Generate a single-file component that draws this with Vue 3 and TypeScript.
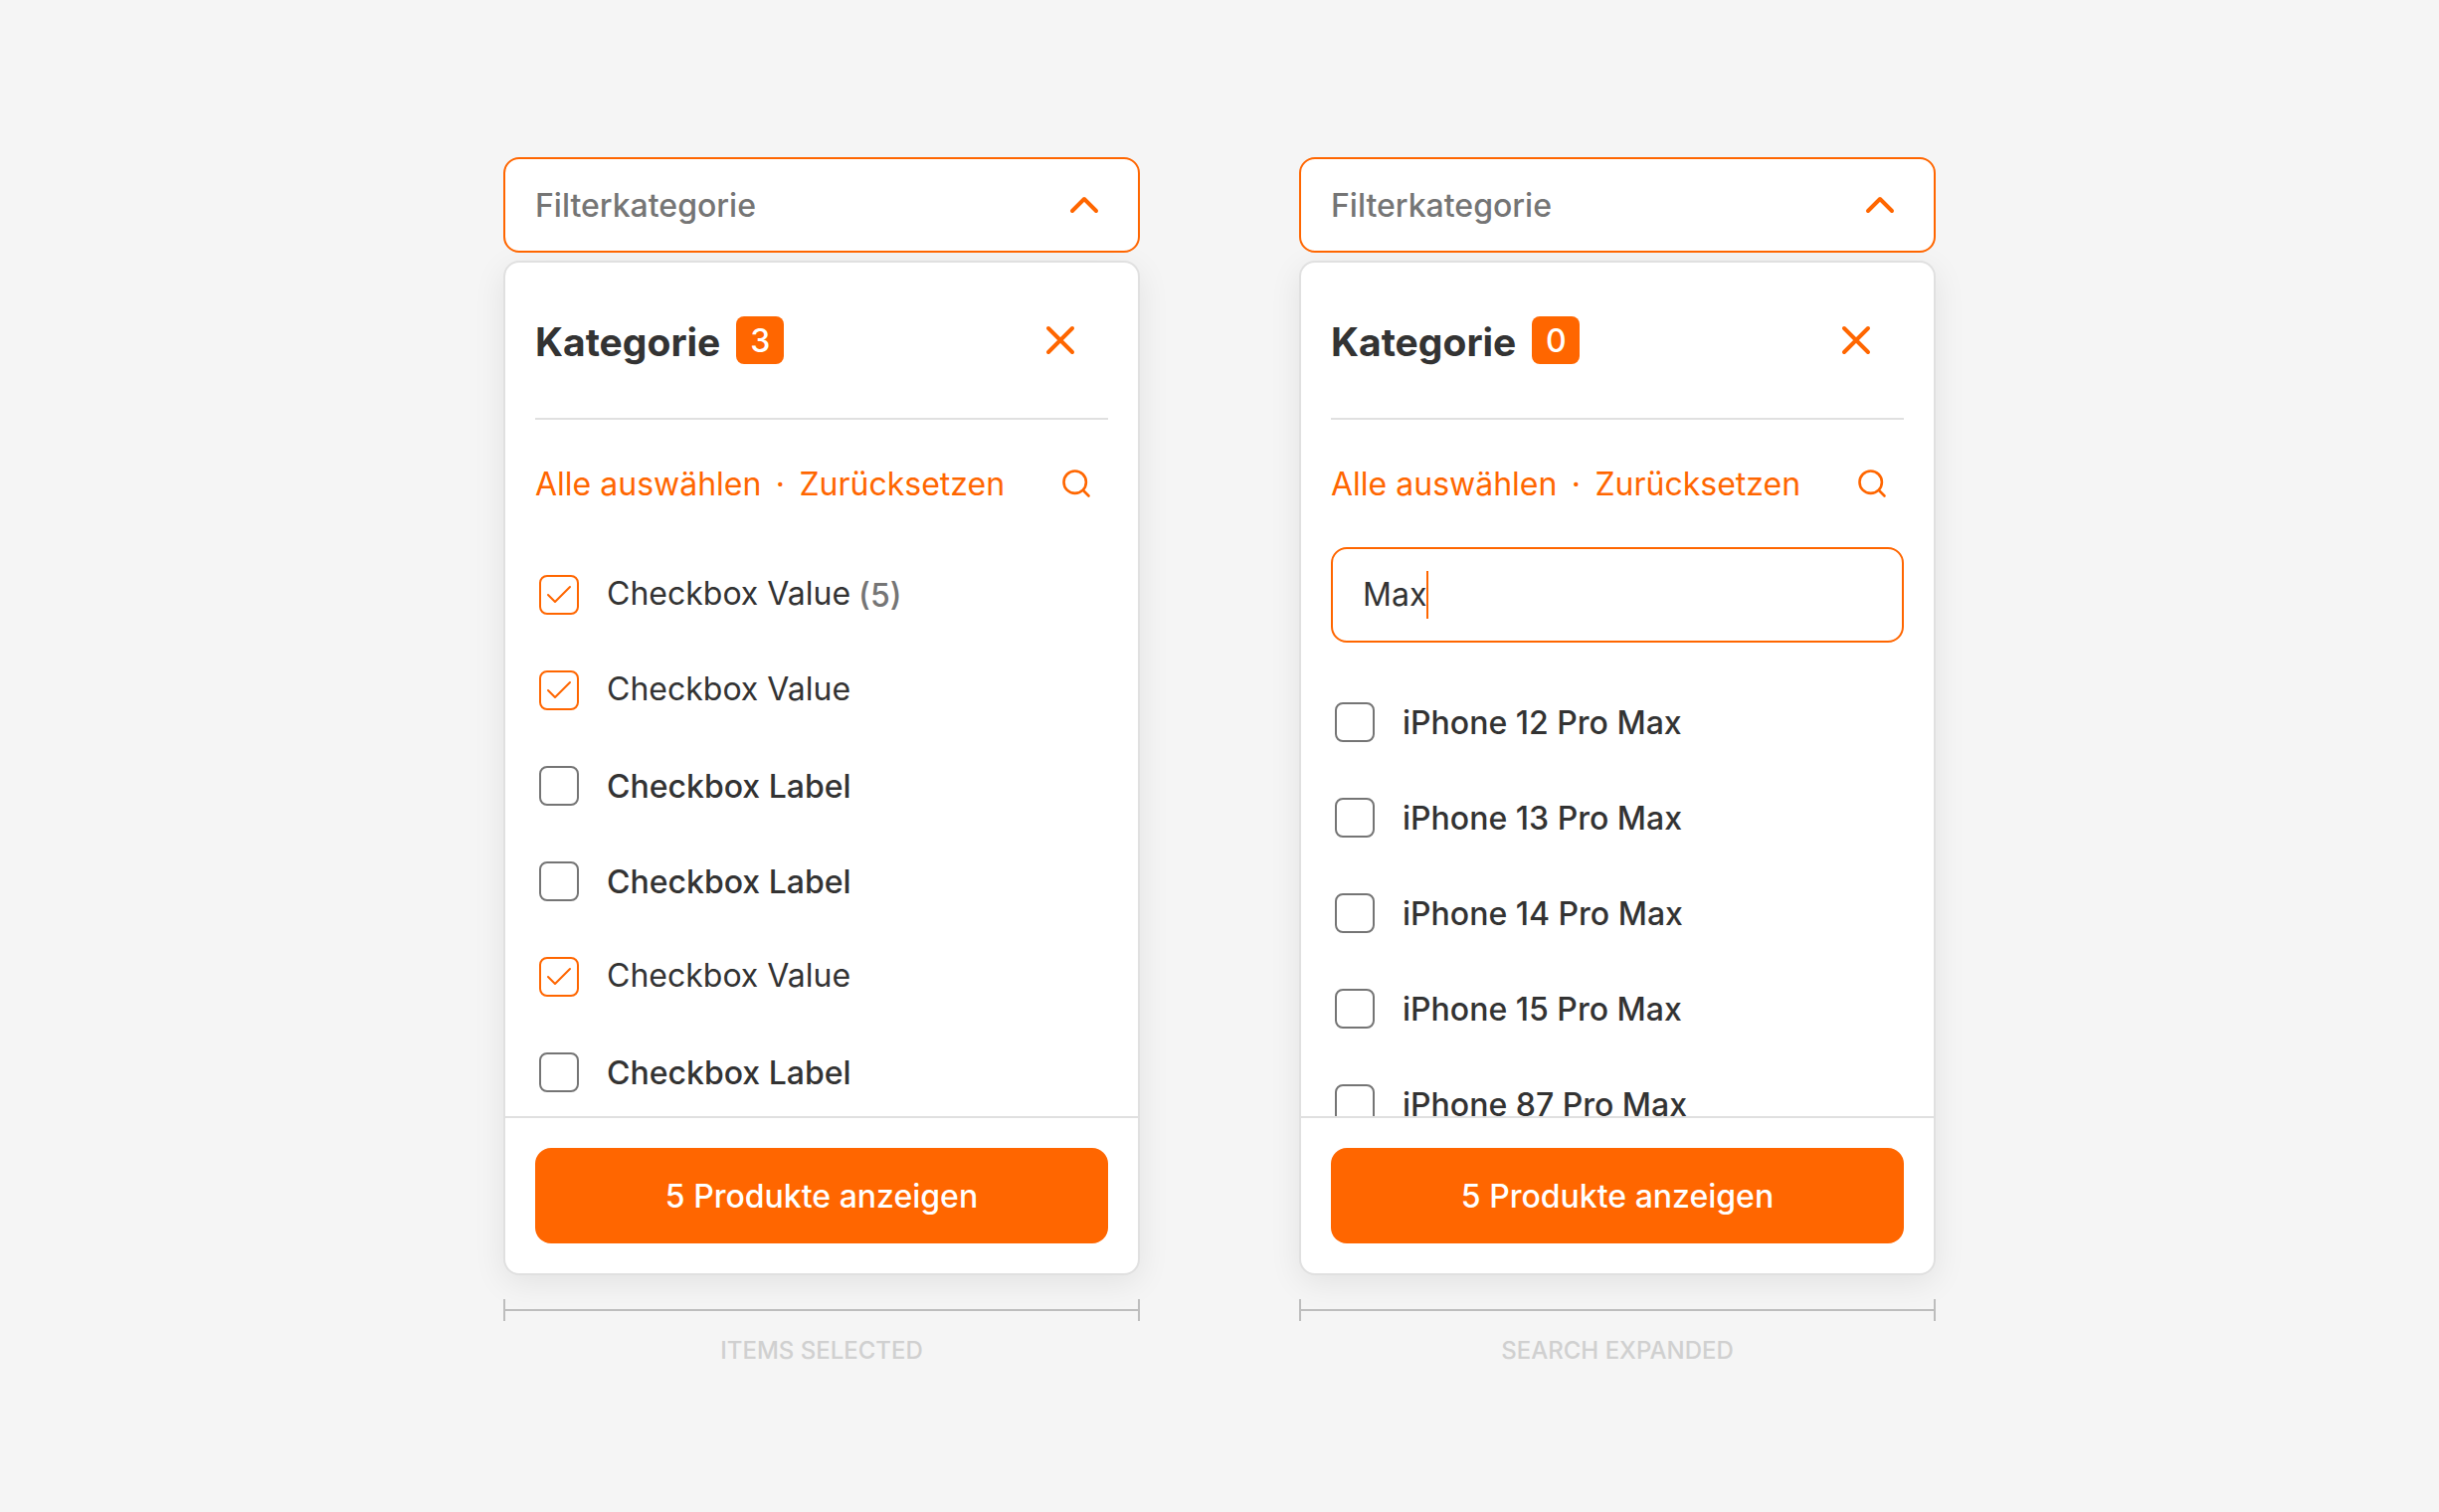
<script setup lang="ts">
import { reactive, computed } from 'vue'

interface Option {
  label: string
  checked: boolean
  count?: number
}

interface Filter {
  id: string
  caption: string
  searchOpen: boolean
  query: string
  options: Option[]
}

const filters = reactive<Filter[]>([
  {
    id: 'selected',
    caption: 'ITEMS SELECTED',
    searchOpen: false,
    query: '',
    options: [
      { label: 'Checkbox Value', checked: true, count: 5 },
      { label: 'Checkbox Value', checked: true },
      { label: 'Checkbox Label', checked: false },
      { label: 'Checkbox Label', checked: false },
      { label: 'Checkbox Value', checked: true },
      { label: 'Checkbox Label', checked: false },
    ],
  },
  {
    id: 'search',
    caption: 'SEARCH EXPANDED',
    searchOpen: true,
    query: 'Max',
    options: ['12', '13', '14', '15', '87'].map((n) => ({
      label: `iPhone ${n} Pro Max`,
      checked: false,
    })),
  },
])

const counts = computed(() =>
  filters.map((f) => f.options.filter((o) => o.checked).length),
)

function setAll(filter: Filter, value: boolean) {
  filter.options.forEach((o) => (o.checked = value))
}
</script>

<template>
  <main class="stage">
    <section v-for="(filter, i) in filters" :key="filter.id" class="column">
      <button class="trigger" type="button" aria-expanded="true">
        <span class="trigger-text">Filterkategorie</span>
        <svg class="icon" viewBox="0 0 48 48" aria-hidden="true">
          <path d="M12 30 24 18 36 30" stroke-width="4" />
        </svg>
      </button>

      <div class="panel">
        <header class="head">
          <h2 class="title">Kategorie</h2>
          <span class="badge">{{ counts[i] }}</span>
          <button class="icon-button close" type="button" aria-label="Schließen">
            <svg class="icon" viewBox="0 0 48 48" aria-hidden="true">
              <path d="M12 12 36 36M36 12 12 36" stroke-width="4" />
            </svg>
          </button>
        </header>

        <div class="tools">
          <button class="link" type="button" @click="setAll(filter, true)">Alle auswählen</button>
          <span class="dot">·</span>
          <button class="link" type="button" @click="setAll(filter, false)">Zurücksetzen</button>
          <button
            class="icon-button search"
            type="button"
            aria-label="Suchen"
            @click="filter.searchOpen = !filter.searchOpen"
          >
            <svg class="icon" viewBox="0 0 48 48" aria-hidden="true">
              <circle cx="22.7" cy="22.7" r="11.2" stroke-width="2.6" />
              <path d="M31 31 36.5 36.5" stroke-width="2.6" />
            </svg>
          </button>
        </div>

        <div class="scroll">
          <div v-if="filter.searchOpen" class="field">
            <input v-model="filter.query" class="input" type="text" aria-label="Suche" />
            <span class="caret" aria-hidden="true"><i>{{ filter.query }}</i></span>
          </div>
          <ul class="options">
            <li v-for="(option, n) in filter.options" :key="n">
              <label class="option" :class="{ checked: option.checked }">
                <span class="check">
                  <input v-model="option.checked" class="box" type="checkbox" />
                  <svg v-if="option.checked" class="tick" viewBox="0 0 40 40" aria-hidden="true">
                    <path d="M9 20 16 27 31 12" stroke-width="2" />
                  </svg>
                </span>
                <span class="label">{{ option.label }}</span>
                <span v-if="option.count" class="count">({{ option.count }})</span>
              </label>
            </li>
          </ul>
        </div>

        <footer class="foot">
          <button class="submit" type="button">5 Produkte anzeigen</button>
        </footer>
      </div>

      <div class="measure"></div>
      <p class="caption">{{ filter.caption }}</p>
    </section>
  </main>
</template>

<style>
body {
  background: #f5f5f5;
}
</style>

<style scoped>
* {
  box-sizing: border-box;
}

.stage {
  display: flex;
  flex-wrap: wrap;
  justify-content: center;
  gap: 160px;
  padding: 158px 32px;
  color: #333;
  font: 400 32px/48px Inter, "Liberation Sans", sans-serif;
}

.column {
  flex: 0 1 640px;
  min-width: 0;
}

button {
  padding: 0;
  border: 0;
  background: none;
  color: #f60;
  font: inherit;
  cursor: pointer;
}

.icon {
  display: block;
  width: 48px;
  height: 48px;
}

.icon,
.tick {
  fill: none;
  stroke: #f60;
  stroke-linecap: round;
  stroke-linejoin: round;
}

.trigger {
  position: relative;
  z-index: 1;
  display: flex;
  align-items: center;
  justify-content: space-between;
  width: 100%;
  height: 96px;
  padding: 0 30px;
  border: 2px solid #f60;
  border-radius: 16px;
  background: #fff;
  color: #757575;
  font-weight: 500;
}

.trigger-text,
.link,
.dot,
.label,
.count,
.submit {
  padding-top: 2px;
}

.panel {
  margin-top: 8px;
  border: 2px solid #e0e0e0;
  border-radius: 16px;
  background: #fff;
  box-shadow: 0 8px 32px rgba(0, 0, 0, 0.08);
}

.head {
  display: flex;
  align-items: center;
  height: 158px;
  margin: 0 30px;
  border-bottom: 2px solid #e0e0e0;
}

.title {
  margin: 0;
  padding-top: 4px;
  font-size: 39px;
  font-weight: 700;
}

.badge {
  width: 48px;
  height: 48px;
  margin-left: 16px;
  border-radius: 8px;
  background: #f60;
  color: #fff;
  font-weight: 500;
  line-height: 50px;
  text-align: center;
}

.icon-button {
  margin-left: auto;
}

.close {
  margin-right: 24px;
}

.search {
  margin-right: 8px;
}

.tools {
  display: flex;
  align-items: center;
  height: 128px;
  padding: 0 30px;
}

.dot {
  width: 38px;
  color: #f60;
  text-align: center;
}

.scroll {
  max-height: 572px;
  padding: 0 30px;
  overflow-y: auto;
  scrollbar-width: none;
}

.field {
  position: relative;
  margin-bottom: 32px;
}

.input {
  display: block;
  width: 100%;
  height: 96px;
  padding: 0 30px 2px;
  border: 2px solid #f60;
  border-radius: 16px;
  outline: 0;
  background: #fff;
  color: inherit;
  font: inherit;
}

.caret {
  position: absolute;
  top: 24px;
  left: 32px;
  height: 48px;
  border-right: 2px solid #f60;
  pointer-events: none;
}

.caret i {
  visibility: hidden;
  font-style: normal;
}

.options {
  margin: 0;
  padding: 0;
  list-style: none;
}

.option {
  display: flex;
  align-items: center;
  height: 96px;
  padding-left: 4px;
  cursor: pointer;
}

.check {
  display: grid;
  width: 40px;
  height: 40px;
  margin-right: 28px;
}

.box,
.tick {
  grid-area: 1 / 1;
  width: 40px;
  height: 40px;
  margin: 0;
}

.tick {
  pointer-events: none;
}

.box {
  appearance: none;
  border: 2px solid #757575;
  border-radius: 8px;
  background: #fff;
}

.box:checked {
  border-color: #f60;
}

.label,
.count {
  font-weight: 500;
}

.checked .label {
  padding: 0 0 2px;
  font-weight: 400;
}

.count {
  margin-left: 8px;
  color: #757575;
}

.foot {
  padding: 30px;
  border-top: 2px solid #e0e0e0;
}

.submit {
  display: block;
  width: 100%;
  height: 96px;
  border-radius: 16px;
  background: #f60;
  color: #fff;
  font-weight: 500;
}

.measure {
  display: flex;
  align-items: center;
  height: 22px;
  margin-top: 24px;
  border: solid #bdbdbd;
  border-width: 0 2px;
}

.measure::before {
  flex: 1;
  height: 2px;
  background: #bdbdbd;
  content: "";
}

.caption {
  margin: 14px 0 0;
  color: #d0d0d0;
  font-size: 24px;
  font-weight: 500;
  line-height: 32px;
  text-align: center;
}
</style>
